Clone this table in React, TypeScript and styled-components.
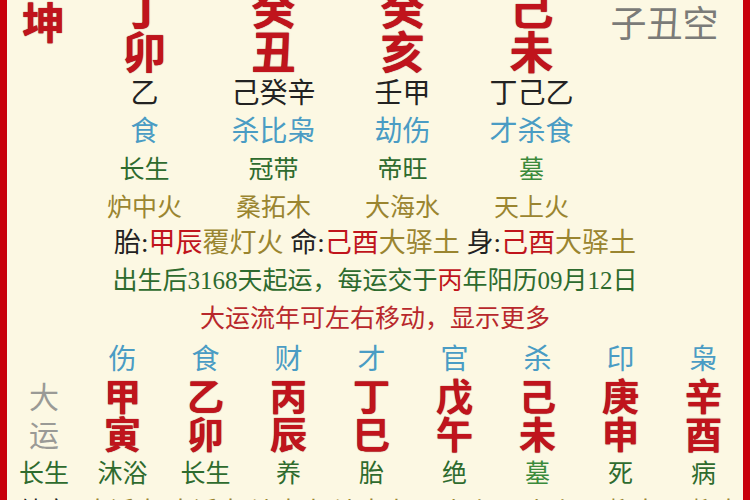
import React from "react";
import styled, { createGlobalStyle } from "styled-components";

const GlobalStyle = createGlobalStyle`
  html, body { margin: 0; padding: 0; background: #fcf8e3; }
  body { font-family: "Noto Sans CJK SC", "Noto Sans", sans-serif; }
`;

const RED = "#c0141c";
const BLUE = "#4a9cc4";
const GREEN = "#2e6b2e";
const OLIVE = "#9a8530";
const DARK = "#222";

const Card = styled.div`
  box-sizing: border-box;
  width: 750px;
  height: 500px;
  overflow: hidden;
  background: #fcf8e3;
  border-left: 7px solid #c8000a;
  border-right: 7px solid #c8000a;
  font-family: "Noto Sans CJK SC", sans-serif;
`;

const TopBlock = styled.div`
  display: flex;
  margin-top: -16px;
`;

const GenderCol = styled.div`
  width: 73px;
  display: flex;
  justify-content: center;
  padding-top: 14px;
  font-size: 43px;
  line-height: 44px;
  font-weight: 700;
  color: ${RED};
  text-shadow: 0 0 1px #7a0008;
`;

const PillarStack = styled.div`
  display: flex;
  flex-direction: column;
`;

const PillarRow = styled.div<{ $h: number }>`
  display: grid;
  grid-template-columns: repeat(4, 129px);
  height: ${(p) => p.$h}px;
  line-height: ${(p) => p.$h}px;
`;

const VoidCol = styled.div`
  flex: 1;
  display: flex;
  justify-content: center;
  padding-top: 15px;
  padding-right: 10px;
  font-size: 36px;
  line-height: 44px;
  color: #7b7b78;
`;

const BigChar = styled.div<{ $size: number }>`
  text-align: center;
  font-size: ${(p) => p.$size}px;
  font-weight: 700;
  color: ${RED};
  text-shadow: 0 0 1px #7a0008;
`;

const TextRow = styled.div<{ $h?: number }>`
  display: grid;
  grid-template-columns: 73px repeat(4, 129px);
  height: ${(p) => p.$h ?? 38}px;
  line-height: ${(p) => p.$h ?? 38}px;
`;

const Cell = styled.div<{ $color: string; $size: number }>`
  text-align: center;
  white-space: nowrap;
  font-size: ${(p) => p.$size}px;
  color: ${(p) => p.$color};
`;

const CenterLine = styled.div<{ $color: string; $size?: number }>`
  height: 38px;
  line-height: 38px;
  text-align: center;
  white-space: nowrap;
  font-size: ${(p) => p.$size ?? 25}px;
  color: ${(p) => p.$color};
  font-family: "Liberation Serif", "Noto Sans CJK SC", serif;
`;

const Tone = styled.span<{ $color: string }>`
  color: ${(p) => p.$color};
`;

const LuckRow = styled.div<{ $h?: number }>`
  display: grid;
  grid-template-columns: 74px repeat(8, 83px);
  height: ${(p) => p.$h ?? 38}px;
  line-height: ${(p) => p.$h ?? 38}px;
`;

const SideLabel = styled.div`
  text-align: center;
  font-size: 30px;
  color: #9a9a96;
`;

const pillars = [
  { stem: "丁", branch: "卯", hidden: "乙", gods: "食", stage: "长生", nayin: "炉中火" },
  { stem: "癸", branch: "丑", hidden: "己癸辛", gods: "杀比枭", stage: "冠带", nayin: "桑拓木" },
  { stem: "癸", branch: "亥", hidden: "壬甲", gods: "劫伤", stage: "帝旺", nayin: "大海水" },
  { stem: "己", branch: "未", hidden: "丁己乙", gods: "才杀食", stage: "墓", nayin: "天上火" },
];

const luck = [
  { god: "伤", stem: "甲", branch: "寅", stage: "沐浴", nayin: "大溪水" },
  { god: "食", stem: "乙", branch: "卯", stage: "长生", nayin: "大溪水" },
  { god: "财", stem: "丙", branch: "辰", stage: "养", nayin: "沙中土" },
  { god: "才", stem: "丁", branch: "巳", stage: "胎", nayin: "沙中土" },
  { god: "官", stem: "戊", branch: "午", stage: "绝", nayin: "天上火" },
  { god: "杀", stem: "己", branch: "未", stage: "墓", nayin: "天上火" },
  { god: "印", stem: "庚", branch: "申", stage: "死", nayin: "石榴木" },
  { god: "枭", stem: "辛", branch: "酉", stage: "病", nayin: "石榴木" },
];

export default function App() {
  return (
    <>
      <GlobalStyle />
      <Card>
        <TopBlock>
          <GenderCol>坤</GenderCol>
          <PillarStack>
            <PillarRow $h={44}>
              {pillars.map((p, i) => (
                <BigChar key={i} $size={44}>{p.stem}</BigChar>
              ))}
            </PillarRow>
            <PillarRow $h={44}>
              {pillars.map((p, i) => (
                <BigChar key={i} $size={44}>{p.branch}</BigChar>
              ))}
            </PillarRow>
          </PillarStack>
          <VoidCol>子丑空</VoidCol>
        </TopBlock>

        <TextRow>
          <div />
          {pillars.map((p, i) => (
            <Cell key={i} $color={DARK} $size={28}>{p.hidden}</Cell>
          ))}
        </TextRow>
        <TextRow>
          <div />
          {pillars.map((p, i) => (
            <Cell key={i} $color={BLUE} $size={28}>{p.gods}</Cell>
          ))}
        </TextRow>
        <TextRow>
          <div />
          {pillars.map((p, i) => (
            <Cell key={i} $color={p.stage === "墓" ? "#3b8a3b" : GREEN} $size={25}>{p.stage}</Cell>
          ))}
        </TextRow>
        <TextRow>
          <div />
          {pillars.map((p, i) => (
            <Cell key={i} $color={OLIVE} $size={25}>{p.nayin}</Cell>
          ))}
        </TextRow>

        <CenterLine $color={DARK} $size={27}>
          胎:<Tone $color={RED}>甲辰</Tone><Tone $color={OLIVE}>覆灯火</Tone> 命:<Tone $color={RED}>己酉</Tone><Tone $color={OLIVE}>大驿土</Tone> 身:<Tone $color={RED}>己酉</Tone><Tone $color={OLIVE}>大驿土</Tone>
        </CenterLine>
        <CenterLine $color={GREEN}>
          出生后3168天起运，每运交于<Tone $color={RED}>丙</Tone>年阳历09月12日
        </CenterLine>
        <CenterLine $color="#b8282c">大运流年可左右移动，显示更多</CenterLine>

        <LuckRow>
          <div />
          {luck.map((l, i) => (
            <Cell key={i} $color={BLUE} $size={28}>{l.god}</Cell>
          ))}
        </LuckRow>
        <LuckRow>
          <SideLabel>大</SideLabel>
          {luck.map((l, i) => (
            <BigChar key={i} $size={37}>{l.stem}</BigChar>
          ))}
        </LuckRow>
        <LuckRow>
          <SideLabel>运</SideLabel>
          {luck.map((l, i) => (
            <BigChar key={i} $size={37}>{l.branch}</BigChar>
          ))}
        </LuckRow>
        <LuckRow>
          <Cell $color={GREEN} $size={25}>长生</Cell>
          {luck.map((l, i) => (
            <Cell key={i} $color={l.stage === "墓" ? "#3b8a3b" : GREEN} $size={25}>{l.stage}</Cell>
          ))}
        </LuckRow>
        <LuckRow>
          <Cell $color={DARK} $size={25}>纳音</Cell>
          {luck.map((l, i) => (
            <Cell key={i} $color={OLIVE} $size={25}>{l.nayin}</Cell>
          ))}
        </LuckRow>
      </Card>
    </>
  );
}
